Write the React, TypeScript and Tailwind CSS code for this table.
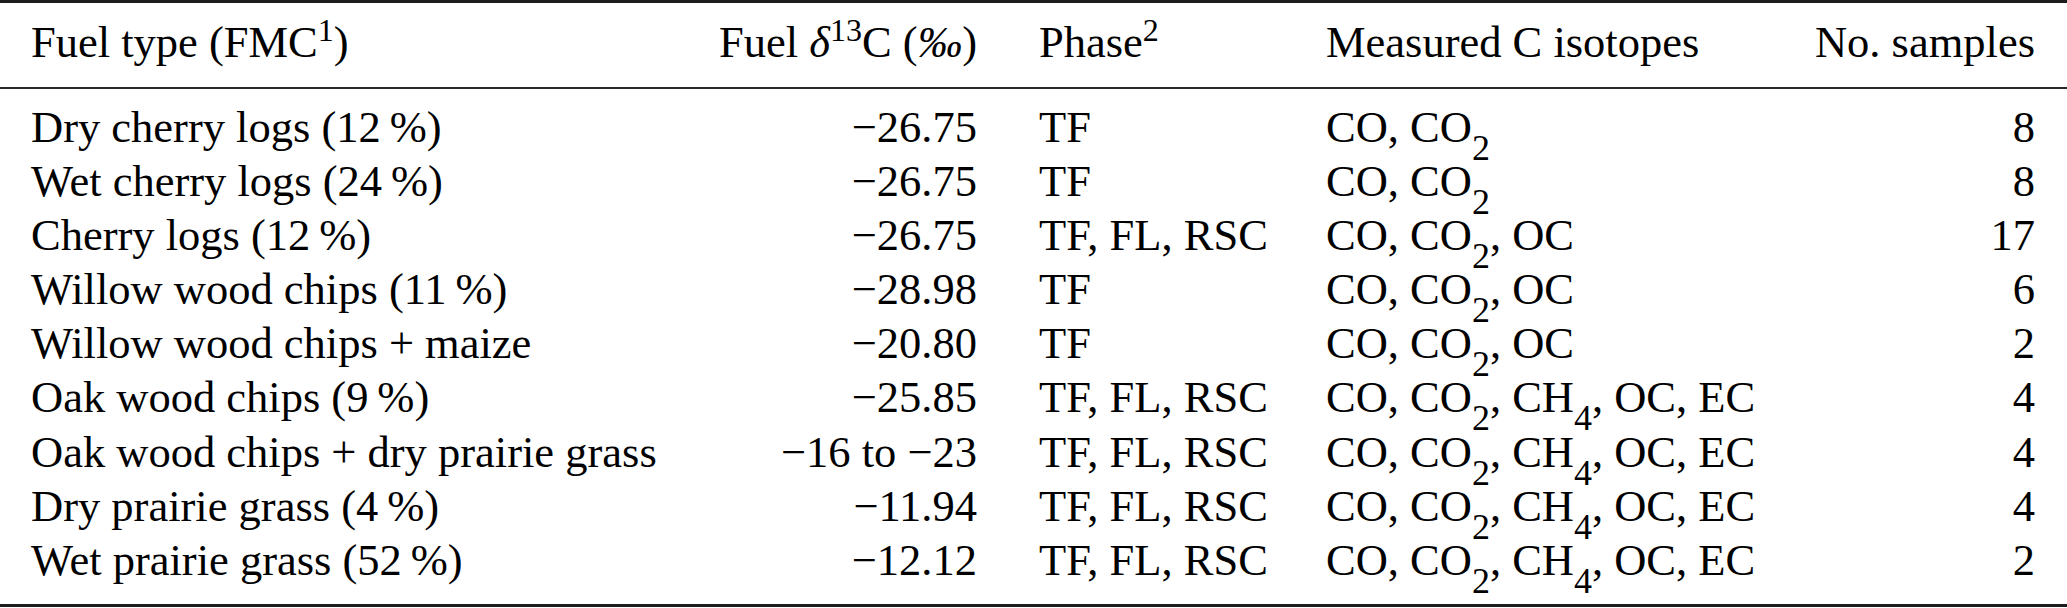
import type { ReactNode } from "react"

// subscript / superscript helpers (LaTeX-ish sizes)
const Sub = ({ children }: { children: ReactNode }) => (
  <sub className="text-[36px] bottom-[-18px]">{children}</sub>
)
const Sup = ({ children }: { children: ReactNode }) => (
  <sup className="text-[32px] top-[-16px]">{children}</sup>
)

const CO2 = (
  <>
    CO<Sub>2</Sub>
  </>
)
const CH4 = (
  <>
    CH<Sub>4</Sub>
  </>
)

type Row = {
  fuel: string
  delta: string
  phase: string
  isotopes: ReactNode
  samples: string
}

const rows: Row[] = [
  { fuel: "Dry cherry logs (12\u2009%)", delta: "−26.75", phase: "TF", isotopes: <>CO, {CO2}</>, samples: "8" },
  { fuel: "Wet cherry logs (24\u2009%)", delta: "−26.75", phase: "TF", isotopes: <>CO, {CO2}</>, samples: "8" },
  { fuel: "Cherry logs (12\u2009%)", delta: "−26.75", phase: "TF, FL, RSC", isotopes: <>CO, {CO2}, OC</>, samples: "17" },
  { fuel: "Willow wood chips (11\u2009%)", delta: "−28.98", phase: "TF", isotopes: <>CO, {CO2}, OC</>, samples: "6" },
  { fuel: "Willow wood chips + maize", delta: "−20.80", phase: "TF", isotopes: <>CO, {CO2}, OC</>, samples: "2" },
  { fuel: "Oak wood chips (9\u2009%)", delta: "−25.85", phase: "TF, FL, RSC", isotopes: <>CO, {CO2}, {CH4}, OC, EC</>, samples: "4" },
  { fuel: "Oak wood chips + dry prairie grass", delta: "−16 to −23", phase: "TF, FL, RSC", isotopes: <>CO, {CO2}, {CH4}, OC, EC</>, samples: "4" },
  { fuel: "Dry prairie grass (4\u2009%)", delta: "−11.94", phase: "TF, FL, RSC", isotopes: <>CO, {CO2}, {CH4}, OC, EC</>, samples: "4" },
  { fuel: "Wet prairie grass (52\u2009%)", delta: "−12.12", phase: "TF, FL, RSC", isotopes: <>CO, {CO2}, {CH4}, OC, EC</>, samples: "2" },
]

export default function App() {
  return (
    <div className="w-[2067px] h-[608px] bg-white text-black font-['Liberation_Serif','Times_New_Roman',serif] text-[44.5px] leading-[54px]">
      {/* top rule */}
      <div className="h-[3px] bg-[#1c1c1c]" />

      {/* header */}
      <div className="grid grid-cols-[669px_277px_349px_1fr_auto] pl-[31px] pr-[32px] pt-[12px] pb-[18px] whitespace-nowrap">
        <div>
          Fuel type (FMC<Sup>1</Sup>)
        </div>
        <div className="text-right">
          Fuel <i>δ</i>
          <Sup>13</Sup>C (<i>‰</i>)
        </div>
        <div className="pl-[62px]">
          Phase<Sup>2</Sup>
        </div>
        <div>Measured C isotopes</div>
        <div className="text-right">No. samples</div>
      </div>

      {/* mid rule */}
      <div className="h-[2px] bg-[#2a2a2a]" />

      {/* body */}
      <div className="pt-[11px] pb-[17px]">
        {rows.map((r, i) => (
          <div
            key={i}
            className="grid grid-cols-[669px_277px_349px_1fr_auto] pl-[31px] pr-[32px] leading-[54.1px] whitespace-nowrap"
          >
            <div>{r.fuel}</div>
            <div className="text-right">{r.delta}</div>
            <div className="pl-[62px]">{r.phase}</div>
            <div>{r.isotopes}</div>
            <div className="text-right">{r.samples}</div>
          </div>
        ))}
      </div>

      {/* bottom rule */}
      <div className="h-[3px] bg-[#1c1c1c]" />
    </div>
  )
}
